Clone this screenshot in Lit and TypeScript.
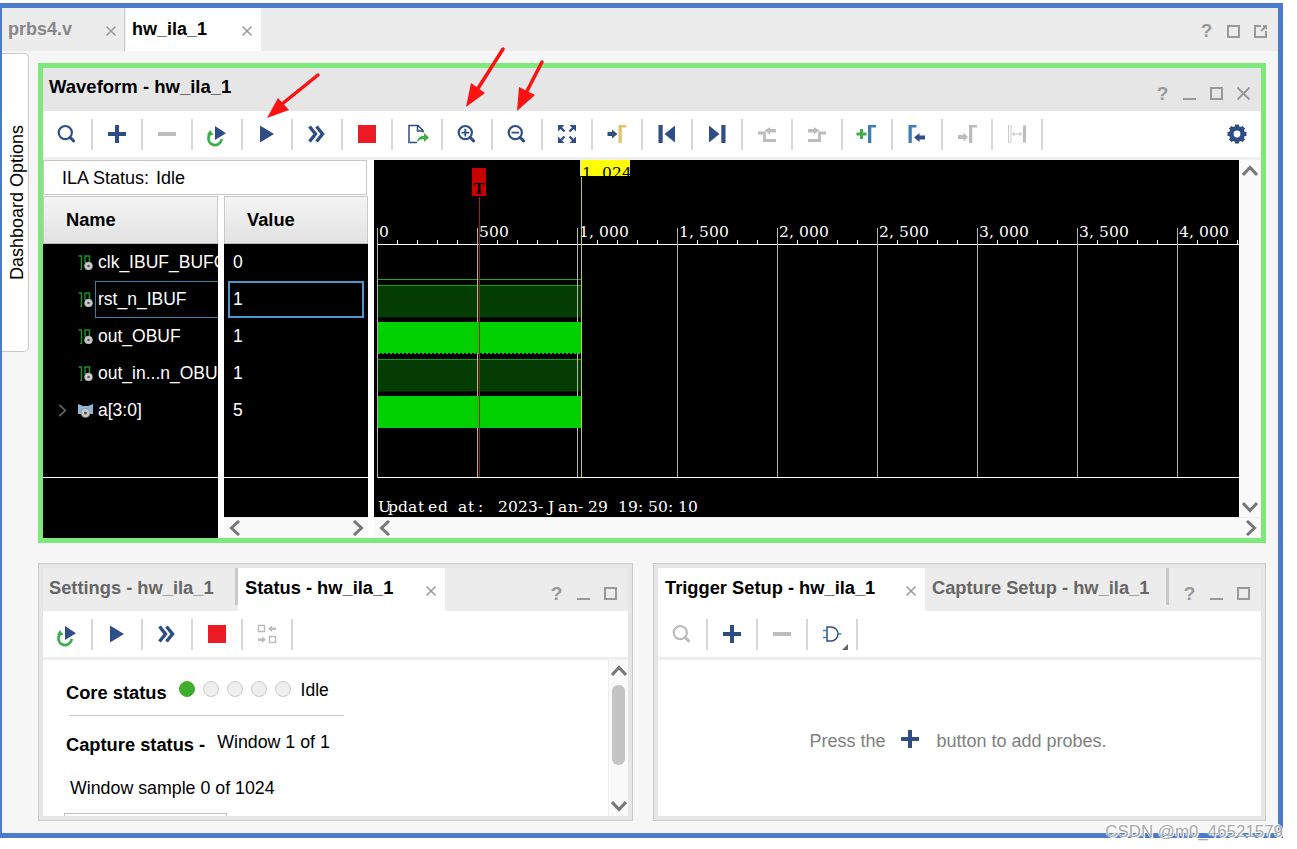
import { LitElement, html, css, svg } from "lit";
import { customElement } from "lit/decorators.js";

const NAVY = "#2f4e85";
const GREY = "#bcbcbc";
const GREEN = "#3fae49";
const STEEL = "#3a7fb5";

const gamma = (x: number, color: string) => svg`<path d="M${x} 21V3h8v2.500h-4.700V21z" fill=${color}/>`;
const glass = (color: string, inner: unknown = "") => svg`
  <circle cx="10.300" cy="10.600" r="6.600" fill="none" stroke=${color} stroke-width="2.200"/>
  <path d="M15 15.300l3.600 3.600" stroke=${color} stroke-width="3" stroke-linecap="round"/>${inner}`;

const icons: Record<string, unknown> = {
  search: glass(NAVY),
  searchOff: glass(GREY),
  plus: svg`<path d="M3 10h18v4H3zM10 3h4v18h-4z" fill=${NAVY}/>`,
  minus: svg`<path d="M3 10h18v4H3z" fill=${GREY}/>`,
  rerun: svg`<path d="M10 4l11 7.300L10 18z" fill=${NAVY}/>
    <path d="M5.200 12a6.600 6.600 0 1 0 11.400 5" fill="none" stroke=${GREEN} stroke-width="2.600"/>
    <path d="M2 13h6.500L5 8z" fill=${GREEN}/>`,
  play: svg`<path d="M5 3.500L19 12 5 20.500z" fill=${NAVY}/>`,
  fast: svg`<path d="M4.500 4.500L10.500 12l-6 7.500M11.500 4.500L17.500 12l-6 7.500" fill="none" stroke=${NAVY} stroke-width="3.400"/>`,
  stop: svg`<rect x="3" y="3" width="18" height="18" fill="#ed1c24"/>`,
  export: svg`<path d="M12 20.500H4V3.500h9l5 5v2M12.500 3.500v5.500H18" fill="none" stroke=${NAVY} stroke-width="1.500"/>
    <path d="M12 20c.5-4.200 3-6 7-6v-3l5 4.500-5 4.500v-3c-3 0-5 1-7 3z" fill=${GREEN}/>`,
  zoomIn: glass(NAVY, svg`<path d="M6.500 10.600h7.600M10.300 6.800v7.600" stroke=${NAVY} stroke-width="1.800"/>`),
  zoomOut: glass(NAVY, svg`<path d="M6.500 10.600h7.600" stroke=${NAVY} stroke-width="1.800"/>`),
  fit: svg`<g fill=${NAVY} stroke=${NAVY}>
    <path d="M3 3h6.500L3 9.500zM21 3h-6.500L21 9.500zM3 21h6.500L3 14.500zM21 21h-6.500L21 14.500z" stroke="none"/>
    <path d="M5 5l4.500 4.500M19 5l-4.500 4.500M5 19l4.500-4.500M19 19l-4.500-4.500" stroke-width="2.400"/></g>`,
  toMarker: svg`<path d="M2.500 10H7V7.500L12.500 12 7 16.500V14H2.500z" fill=${NAVY}/>${gamma(13.5, "#e0c36a")}`,
  first: svg`<path d="M3.500 3h4.200v18H3.500zM20 3.500v17L9.500 12z" fill=${NAVY}/>`,
  last: svg`<path d="M4 3.500v17L14.500 12zM16.300 3h4.200v18h-4.200z" fill=${NAVY}/>`,
  prevEdge: svg`<path d="M9.500 8.500L15 5v2h6v3.500h-6v2z" fill=${GREY}/><path d="M3 11h6.500v7.500H21" fill="none" stroke=${GREY} stroke-width="2.800"/>`,
  nextEdge: svg`<path d="M3 7h6V5l5.500 3.500L9 12v-1.500H3z" fill=${GREY}/><path d="M21 11h-6.500v7.500H3" fill="none" stroke=${GREY} stroke-width="2.800"/>`,
  addMarker: svg`<path d="M1.500 10.500H5V7h3v3.500h3.500v3H8V17H5v-3.500H1.500z" fill=${GREEN}/>${gamma(13, STEEL)}`,
  fromMarker: svg`${gamma(3.5, STEEL)}<path d="M9 15.500l5.500-4.500v2.500H20v4h-5.500V20z" fill=${NAVY}/>`,
  toMarkerOff: svg`<path d="M3 13h5.500v-2.500L13 15l-4.500 4.500V17H3z" fill=${GREY}/>${gamma(14, GREY)}`,
  span: svg`<rect x="3.500" y="4" width="2.500" height="16" fill="none" stroke="#c9c9c9"/><rect x="18" y="3.500" width="3" height="17" fill=${GREY}/>
    <path d="M7.500 12h9M9.500 10l-2 2 2 2M14.500 10l2 2-2 2" fill="none" stroke=${GREY}/>`,
  swap: svg`<g fill="none" stroke=${GREY} stroke-width="1.500"><rect x="3.500" y="3.500" width="6" height="6"/><rect x="14.500" y="14.500" width="6" height="6"/></g>
    <path d="M13 6.500l4-3v2h4v2.500h-4v2zM11 17.500l-4-3v2H3V19h4v2z" fill=${GREY}/>`,
  gate: svg`<path d="M7 5h4a7 7 0 0 1 0 14H7z" fill="none" stroke=${NAVY} stroke-width="1.500"/>
    <path d="M18 12h3.500M3 8.500h4M3 15.500h4" stroke=${STEEL} stroke-width="1.500"/>
    <path d="M28 28h-6l6-6z" fill="#666"/>`,
  gear: svg`<g fill=${NAVY}><circle cx="12" cy="12" r="5.700" fill="none" stroke=${NAVY} stroke-width="4.600"/>
    ${[0, 45, 90, 135, 180, 225, 270, 315].map(
      (a) => svg`<rect x="10" y="2.500" width="4" height="4" transform="rotate(${a} 12 12)"/>`,
    )}</g>`,
};

const tool = (name: string) => html`<span class="tool"><svg viewBox="0 0 24 24" width="24" height="24">${icons[name]}</svg></span>`;

const chevron = (dir: string) => html`<svg class="chev" viewBox="0 0 16 16" width="16" height="16">
  <path transform="rotate(${({ left: 180, right: 0, up: -90, down: 90 } as Record<string, number>)[dir]} 8 8)"
    d="M4 1l7.500 7L4 15" fill="none" stroke="#777" stroke-width="3"/></svg>`;

const closeX = html`<svg class="x" viewBox="0 0 12 12" width="12" height="12"><path d="M1.500 1.500l9 9M10.500 1.500l-9 9" stroke="#999" stroke-width="1.500"/></svg>`;

const winBtn = (kind: string) => {
  if (kind === "help") return html`<span class="help">?</span>`;
  const d: Record<string, unknown> = {
    min: svg`<path d="M0 12h13" stroke="#999" stroke-width="2"/>`,
    max: svg`<rect x="1" y="1" width="11" height="11" fill="none" stroke="#999" stroke-width="2"/>`,
    close: svg`<path d="M.5 .5l12 12M12.500 .5l-12 12" stroke="#999" stroke-width="2"/>`,
    float: svg`<path d="M7 1H1v11h11V6M7 6l5-5M9 1h3.500v3.500" fill="none" stroke="#999" stroke-width="2"/>`,
  };
  return html`<svg class="win" viewBox="0 0 13 13" width="13" height="13">${d[kind]}</svg>`;
};

const bitIcon = html`<svg class="sig" viewBox="0 0 15 15" width="15" height="15">
  <path d="M.5 1H3.500V14.500H2M7 8V1h4.500v7" fill="none" stroke="#1f8a2a" stroke-width="1.500"/>
  <circle cx="10.500" cy="11" r="4" fill="#ccc" stroke="#999" stroke-width=".6"/><circle cx="10.500" cy="11" r="1.300" fill="#555"/></svg>`;
const busIcon = html`<svg class="sig" viewBox="0 0 15 15" width="15" height="15">
  <path d="M0 1l5 2h5l5-2v10H0z" fill="#8fb8d8"/>
  <circle cx="7.500" cy="10" r="4.500" fill="#ccc" stroke="#777" stroke-width=".6"/><circle cx="7.500" cy="10" r="1.600" fill="#555"/></svg>`;

/** Waveform time labels are fixed pitch: each glyph gets its own 10px cell. */
const monoText = (x: number, y: number, text: string, fill = "#fff") =>
  svg`<text class="mono" x=${[...text].map((_, i) => x + i * 10).join(" ")} y=${y} fill=${fill}>${text}</text>`;

const MAJOR = [0, 1, 2, 3, 4, 5, 6, 7, 8];
const LABELS = ["0", "500", "1,000", "1,500", "2,000", "2,500", "3,000", "3,500", "4,000"];

const waveSvg = () => {
  const minors: number[] = [];
  for (let x = 377.5; x < 1239; x += 20) minors.push(x);
  return html`<svg class="wave" viewBox="374 160 865 357" width="865" height="357">
    <rect x="374" y="160" width="865" height="357" fill="#000"/>
    ${minors.map((x) => svg`<path d="M${x} 240v4" stroke="#fff"/>`)}
    <path d="M377 244.500H1239" stroke="#fff"/>
    <path d="M378 279.500H581" stroke="#22a822"/>
    <rect x="378" y="286" width="203" height="31.500" fill="#033d03"/>
    <rect x="378" y="360" width="203" height="31.500" fill="#033d03"/>
    <path d="M378 285.500H581M378 359.500H581" stroke="#14a014"/>
    ${MAJOR.map((i) => svg`<path d="M${377.5 + i * 100} 228V477" stroke="#b4b4b4"/>
      ${monoText(379 + i * 100, 237, LABELS[i])}`)}
    <rect x="378" y="322" width="203" height="31" fill="#00d000"/>
    <rect x="378" y="396" width="203" height="32" fill="#00d000"/>
    <path d="M378 353.500H581" stroke="#00d000" stroke-dasharray="2 2"/>
    <path d="M377.500 477.500H1239" stroke="#fff"/>
    <path d="M479.500 197V477" stroke="#b01818"/>
    <path d="M581.500 177V477" stroke="#c8c83c"/>
    <rect x="472" y="168" width="14" height="28" fill="#c80000"/>
    <text class="trig" x="479" y="194" text-anchor="middle">T</text>
    <rect x="580" y="160" width="50" height="16" fill="#ff0"/>
    <path d="M580.500 160v16" stroke="#ddd"/>
    <svg x="580" y="160" width="50" height="16" viewBox="580 160 50 16">${monoText(582, 178, "1,024", "#000")}</svg>
    ${monoText(378, 512, "Updated at: 2023-Jan-29 19:50:10")}
  </svg>`;
};

const arrow = (tail: string, line: string, head: string) =>
  svg`<path d="M${tail}L${line}" stroke="#f11" stroke-width="3.500" stroke-linecap="round"/><polygon points=${head} fill="#f11"/>`;

@customElement("app-root")
export class AppRoot extends LitElement {
  static styles = css`
    :host { display: block; position: relative; width: 1297px; height: 849px; background: #fff; overflow: hidden;
      font: 17.500px/1.2 "Liberation Sans", Arial, sans-serif; color: #000; }
    svg { display: block; flex: none; }
    b { font-size: 18.300px; }
    .frame { box-sizing: border-box; width: 1283px; height: 835px; margin-top: 3px; display: flex; flex-direction: column;
      border: solid #4a7ccb; border-width: 5px 5px 5px 2px; background: #f6f6f6; }

    .doctabs { display: flex; align-items: center; height: 43px; flex: none; background: #ececec; font-weight: 700; font-size: 18px; }
    .doctab { display: flex; align-items: center; height: 100%; box-sizing: border-box; }
    .doctab.off { width: 123px; padding-left: 6px; color: #888; border-right: 1px solid #ccc; }
    .doctab.on { width: 135px; margin-left: 1px; padding-left: 6px; background: #fff; }
    .doctab .x { margin-left: auto; margin-top: 3px; }
    .doctab.off .x { margin-right: 7px; }
    .doctab.on .x { margin-right: 8px; }
    .winbtns { margin-left: auto; display: flex; align-items: center; }
    .help { font-weight: 700; font-size: 19px; line-height: 20px; color: #999; width: 13px; text-align: center; }
    .win { flex: none; }
    .doctabs .winbtns { gap: 14px; padding-right: 11px; padding-top: 3px; }

    .body { flex: 1; display: flex; min-height: 0; }
    .dash { box-sizing: border-box; width: 27px; height: 299px; margin-top: 2px; padding-left: 6px; background: #fff; flex: none;
      border: 1px solid #c8c8c8; border-left: 0; border-radius: 0 5px 5px 0; display: flex; align-items: center; justify-content: center; }
    .dash span { writing-mode: vertical-rl; transform: rotate(180deg); font-size: 18px; white-space: nowrap; }
    .main { width: 1228px; margin-left: 9px; padding-top: 12px; display: flex; flex-direction: column; gap: 20px; }

    .wavepanel { box-sizing: border-box; height: 480px; border: 5px solid #7fe87a; display: flex; flex-direction: column; background: #fff; }
    .head { height: 43px; flex: none; background: #e6e6e6; display: flex; align-items: center; padding: 0 11px 4px 6px; box-sizing: border-box; font-weight: 700; font-size: 18.500px; }
    .head .winbtns { gap: 14px; padding-top: 12px; }
    .toolbar { height: 46px; flex: none; background: #fff; display: flex; align-items: center; border-bottom: 3px solid #eee; box-sizing: content-box; }
    .tool { width: 48px; height: 46px; display: flex; align-items: center; justify-content: center; flex: none; }
    .tool svg { overflow: visible; }
    .sep { width: 2px; height: 31px; background: #d8d8d8; flex: none; }
    .gear { margin-left: auto; margin-right: 0; }

    .content { flex: 1; display: flex; gap: 6px; min-height: 0; }
    .left { width: 325px; flex: none; display: flex; flex-direction: column; }
    .ila { box-sizing: border-box; height: 35px; width: 324px; flex: none; border: 1px solid #c8c8c8; display: flex; align-items: center; gap: 7px; padding: 3px 0 0 18px; font-size: 18px; margin-bottom: 1px; }
    .cols { flex: 1; display: flex; gap: 6px; min-height: 0; }
    .col { display: flex; flex-direction: column; background: #000; }
    .col.name { width: 175px; }
    .col.value { width: 144px; }
    .colhead { box-sizing: border-box; height: 48px; flex: none; display: flex; align-items: center; background: linear-gradient(#f4f4f4, #e2e2e2);
      border: 1px solid #c8c8c8; border-bottom-color: #bbb; font-weight: 700; font-size: 18.300px; }
    .name .colhead { padding-left: 22px; }
    .value .colhead { padding-left: 22px; }
    .rows { box-sizing: border-box; height: 234px; flex: none; border-bottom: 1px solid #fff; color: #fff; }
    .row { position: relative; box-sizing: border-box; height: 37px; display: flex; align-items: center; white-space: nowrap; overflow: hidden; }
    .name .row { padding-left: 35px; gap: 5px; }
    .value .row { padding-left: 9px; }
    .row.sel::after { content: ""; position: absolute; box-sizing: border-box; top: 0; height: 37px; }
    .name .row.sel::after { left: 52px; right: 0; border: 1px solid #3b7ea8; border-right: 0; }
    .value .row.sel::after { left: 4px; right: 4px; border: 2px solid #4b97cf; }
    .expander { position: relative; }
    .expander .chev { position: absolute; left: 13px; top: 12px; width: 13px; height: 13px; }
    .expander .chev path { stroke: #666; stroke-width: 2; }
    .spacer { flex: 1; }
    .hbar { height: 21px; flex: none; box-sizing: border-box; background: #f9f9f9; border-top: 1px solid #eee; border-bottom: 1px solid #eee;
      display: flex; align-items: center; justify-content: space-between; padding: 0 2px 0 3px; }
    .wavewrap { width: 887px; flex: none; display: flex; flex-direction: column; }
    .waverow { display: flex; height: 357px; flex: none; }
    .vbar { flex: 1; background: #f9f9f9; display: flex; flex-direction: column; align-items: center; justify-content: space-between; padding: 3px 0 2px; box-sizing: border-box; }
    .mono { font: 15.500px "DejaVu Serif", serif; }
    .trig { font: 700 17px "Liberation Serif", serif; fill: #000; }

    .bottom { display: flex; gap: 20px; height: 258px; flex: none; }
    .panel { box-sizing: border-box; border: 1px solid #ccc; height: 258px; background: #e6e6e6; padding: 4px; display: flex; flex-direction: column; }
    .panel.a { width: 595px; }
    .panel.b { width: 613px; }
    .tabs { height: 43px; flex: none; display: flex; background: #ececec; font-weight: 700; font-size: 18.300px; }
    .tab { box-sizing: border-box; height: 100%; display: flex; align-items: center; padding-left: 7px; padding-bottom: 3px; }
    .tab.t-settings { padding-left: 6px; width: 192px; }
    .tab.t-status { width: 207px; }
    .tab.t-trigger { width: 267px; }
    .tab.t-capture { width: 241px; }
    .tab.off { color: #666; }
    .tab.on { background: #fff; }
    .tab .x { margin-left: auto; margin-right: 8px; margin-top: 6px; }
    .tabsep { width: 3px; height: 37px; background: #c8c8c8; flex: none; }
    .panel .winbtns { gap: 14px; padding-right: 11px; padding-top: 8px; }
    .pbody { flex: 1; display: flex; background: #fff; min-height: 0; }
    .statusbody { flex: 1; min-width: 0; overflow: hidden; padding-left: 23px; box-sizing: border-box; }
    .line { display: flex; align-items: center; }
    .core { height: 22px; margin-top: 20px; }
    .core b { padding-top: 3px; margin-right: 12px; }
    .leds { display: flex; gap: 8px; align-items: center; margin-bottom: 4px; }
    .led { box-sizing: border-box; width: 16px; height: 16px; border-radius: 50%; background: #eee; border: 1px solid #ccc; }
    .led.go { background: #3fae2a; border-color: #3fae2a; }
    .core .idle { margin-left: 10px; margin-bottom: 2px; }
    .rule { height: 1px; width: 275px; background: #ccc; margin: 13px 0 0 3px; }
    .capline { margin-top: 18px; gap: 12px; }
    .capline span { margin-top: -4px; font-size: 17.800px; }
    .sample { margin: 22px 0 0 4px; font-size: 17.800px; }
    .stub { box-sizing: border-box; width: 163px; height: 20px; margin: 14px 0 0 -2px; border: 1px solid #c0c0c0; }
    .sbar { width: 20px; flex: none; background: #f9f9f9; border-left: 1px solid #eee; box-sizing: border-box; display: flex; flex-direction: column; align-items: center; padding: 3px 0 2px; }
    .thumb { width: 13px; height: 80px; border-radius: 6px; background: #c4c4c4; margin-top: 6px; }
    .sbar .chev:last-child { margin-top: auto; }
    .hint { flex: 1; display: flex; align-items: center; justify-content: center; color: #808080; padding-right: 3px; padding-top: 8px; font-size: 18px; }
    .hint svg { margin: 0 14px 6px 13px; }

    .arrows { position: absolute; left: 0; top: 0; pointer-events: none; }
    .mark { position: absolute; right: 14px; bottom: 8px; font-size: 16.900px; line-height: 18px; color: #a8a8a8; text-shadow: 0 0 1px #fff, 1px 1px 0 #fff, -1px -1px 0 #fff; white-space: nowrap; }
  `;

  private bar(names: string[], tail: unknown = "") {
    return html`<div class="toolbar">
      ${names.map((n) => html`${tool(n)}<span class="sep"></span>`)}${tail}
    </div>`;
  }

  render() {
    const names = [
      ["clk_IBUF_BUFG", "0"],
      ["rst_n_IBUF", "1"],
      ["out_OBUF", "1"],
      ["out_in...n_OBUF", "1"],
    ];
    return html`
      <div class="frame">
        <div class="doctabs">
          <div class="doctab off">prbs4.v${closeX}</div>
          <div class="doctab on">hw_ila_1${closeX}</div>
          <div class="winbtns">${winBtn("help")}${winBtn("max")}${winBtn("float")}</div>
        </div>
        <div class="body">
          <div class="dash"><span>Dashboard Options</span></div>
          <div class="main">
            <section class="wavepanel">
              <div class="head">Waveform - hw_ila_1
                <div class="winbtns">${winBtn("help")}${winBtn("min")}${winBtn("max")}${winBtn("close")}</div>
              </div>
              ${this.bar(
                ["search", "plus", "minus", "rerun", "play", "fast", "stop", "export", "zoomIn", "zoomOut", "fit", "toMarker", "first", "last", "prevEdge", "nextEdge", "addMarker", "fromMarker", "toMarkerOff", "span"],
                html`<span class="tool gear">${tool("gear")}</span>`,
              )}
              <div class="content">
                <div class="left">
                  <div class="ila"><span>ILA Status:</span><span>Idle</span></div>
                  <div class="cols">
                    <div class="col name">
                      <div class="colhead">Name</div>
                      <div class="rows">
                        ${names.map((r, i) => html`<div class="row ${i === 1 ? "sel" : ""}">${bitIcon}<span>${r[0]}</span></div>`)}
                        <div class="row expander">${chevron("right")}${busIcon}<span>a[3:0]</span></div>
                      </div>
                      <div class="spacer"></div>
                    </div>
                    <div class="col value">
                      <div class="colhead">Value</div>
                      <div class="rows">
                        ${names.map((r, i) => html`<div class="row ${i === 1 ? "sel" : ""}">${r[1]}</div>`)}
                        <div class="row">5</div>
                      </div>
                      <div class="spacer"></div>
                      <div class="hbar">${chevron("left")}${chevron("right")}</div>
                    </div>
                  </div>
                </div>
                <div class="wavewrap">
                  <div class="waverow">${waveSvg()}<div class="vbar">${chevron("up")}${chevron("down")}</div></div>
                  <div class="hbar">${chevron("left")}${chevron("right")}</div>
                </div>
              </div>
            </section>
            <div class="bottom">
              <section class="panel a">
                <div class="tabs">
                  <div class="tab off t-settings">Settings - hw_ila_1</div><span class="tabsep"></span>
                  <div class="tab on t-status">Status - hw_ila_1${closeX}</div>
                  <div class="winbtns">${winBtn("help")}${winBtn("min")}${winBtn("max")}</div>
                </div>
                ${this.bar(["rerun", "play", "fast", "stop", "swap"])}
                <div class="pbody">
                  <div class="statusbody">
                    <div class="line core"><b>Core status</b>
                      <div class="leds"><span class="led go"></span><span class="led"></span><span class="led"></span><span class="led"></span><span class="led"></span></div>
                      <span class="idle">Idle</span>
                    </div>
                    <div class="rule"></div>
                    <div class="line capline"><b>Capture status -</b><span>Window 1 of 1</span></div>
                    <div class="sample">Window sample 0 of 1024</div>
                    <div class="stub"></div>
                  </div>
                  <div class="sbar">${chevron("up")}<div class="thumb"></div>${chevron("down")}</div>
                </div>
              </section>
              <section class="panel b">
                <div class="tabs">
                  <div class="tab on t-trigger">Trigger Setup - hw_ila_1${closeX}</div>
                  <div class="tab off t-capture">Capture Setup - hw_ila_1</div><span class="tabsep"></span>
                  <div class="winbtns">${winBtn("help")}${winBtn("min")}${winBtn("max")}</div>
                </div>
                ${this.bar(["searchOff", "plus", "minus", "gate"])}
                <div class="pbody">
                  <div class="hint"><span>Press the</span>
                    <svg viewBox="0 0 24 24" width="24" height="24">${icons.plus}</svg>
                    <span>button to add probes.</span></div>
                </div>
              </section>
            </div>
          </div>
        </div>
      </div>
      <svg class="arrows" width="1297" height="849" viewBox="0 0 1297 849">
        ${arrow("318 75", "282 104", "267,118 278,98 289,110")}
        ${arrow("503 49", "477 90", "466,107 471,83 485,93")}
        ${arrow("542 62", "526 93", "517,111 519,87 535,95")}
      </svg>
      <div class="mark">CSDN @m0_46521579</div>
    `;
  }
}
